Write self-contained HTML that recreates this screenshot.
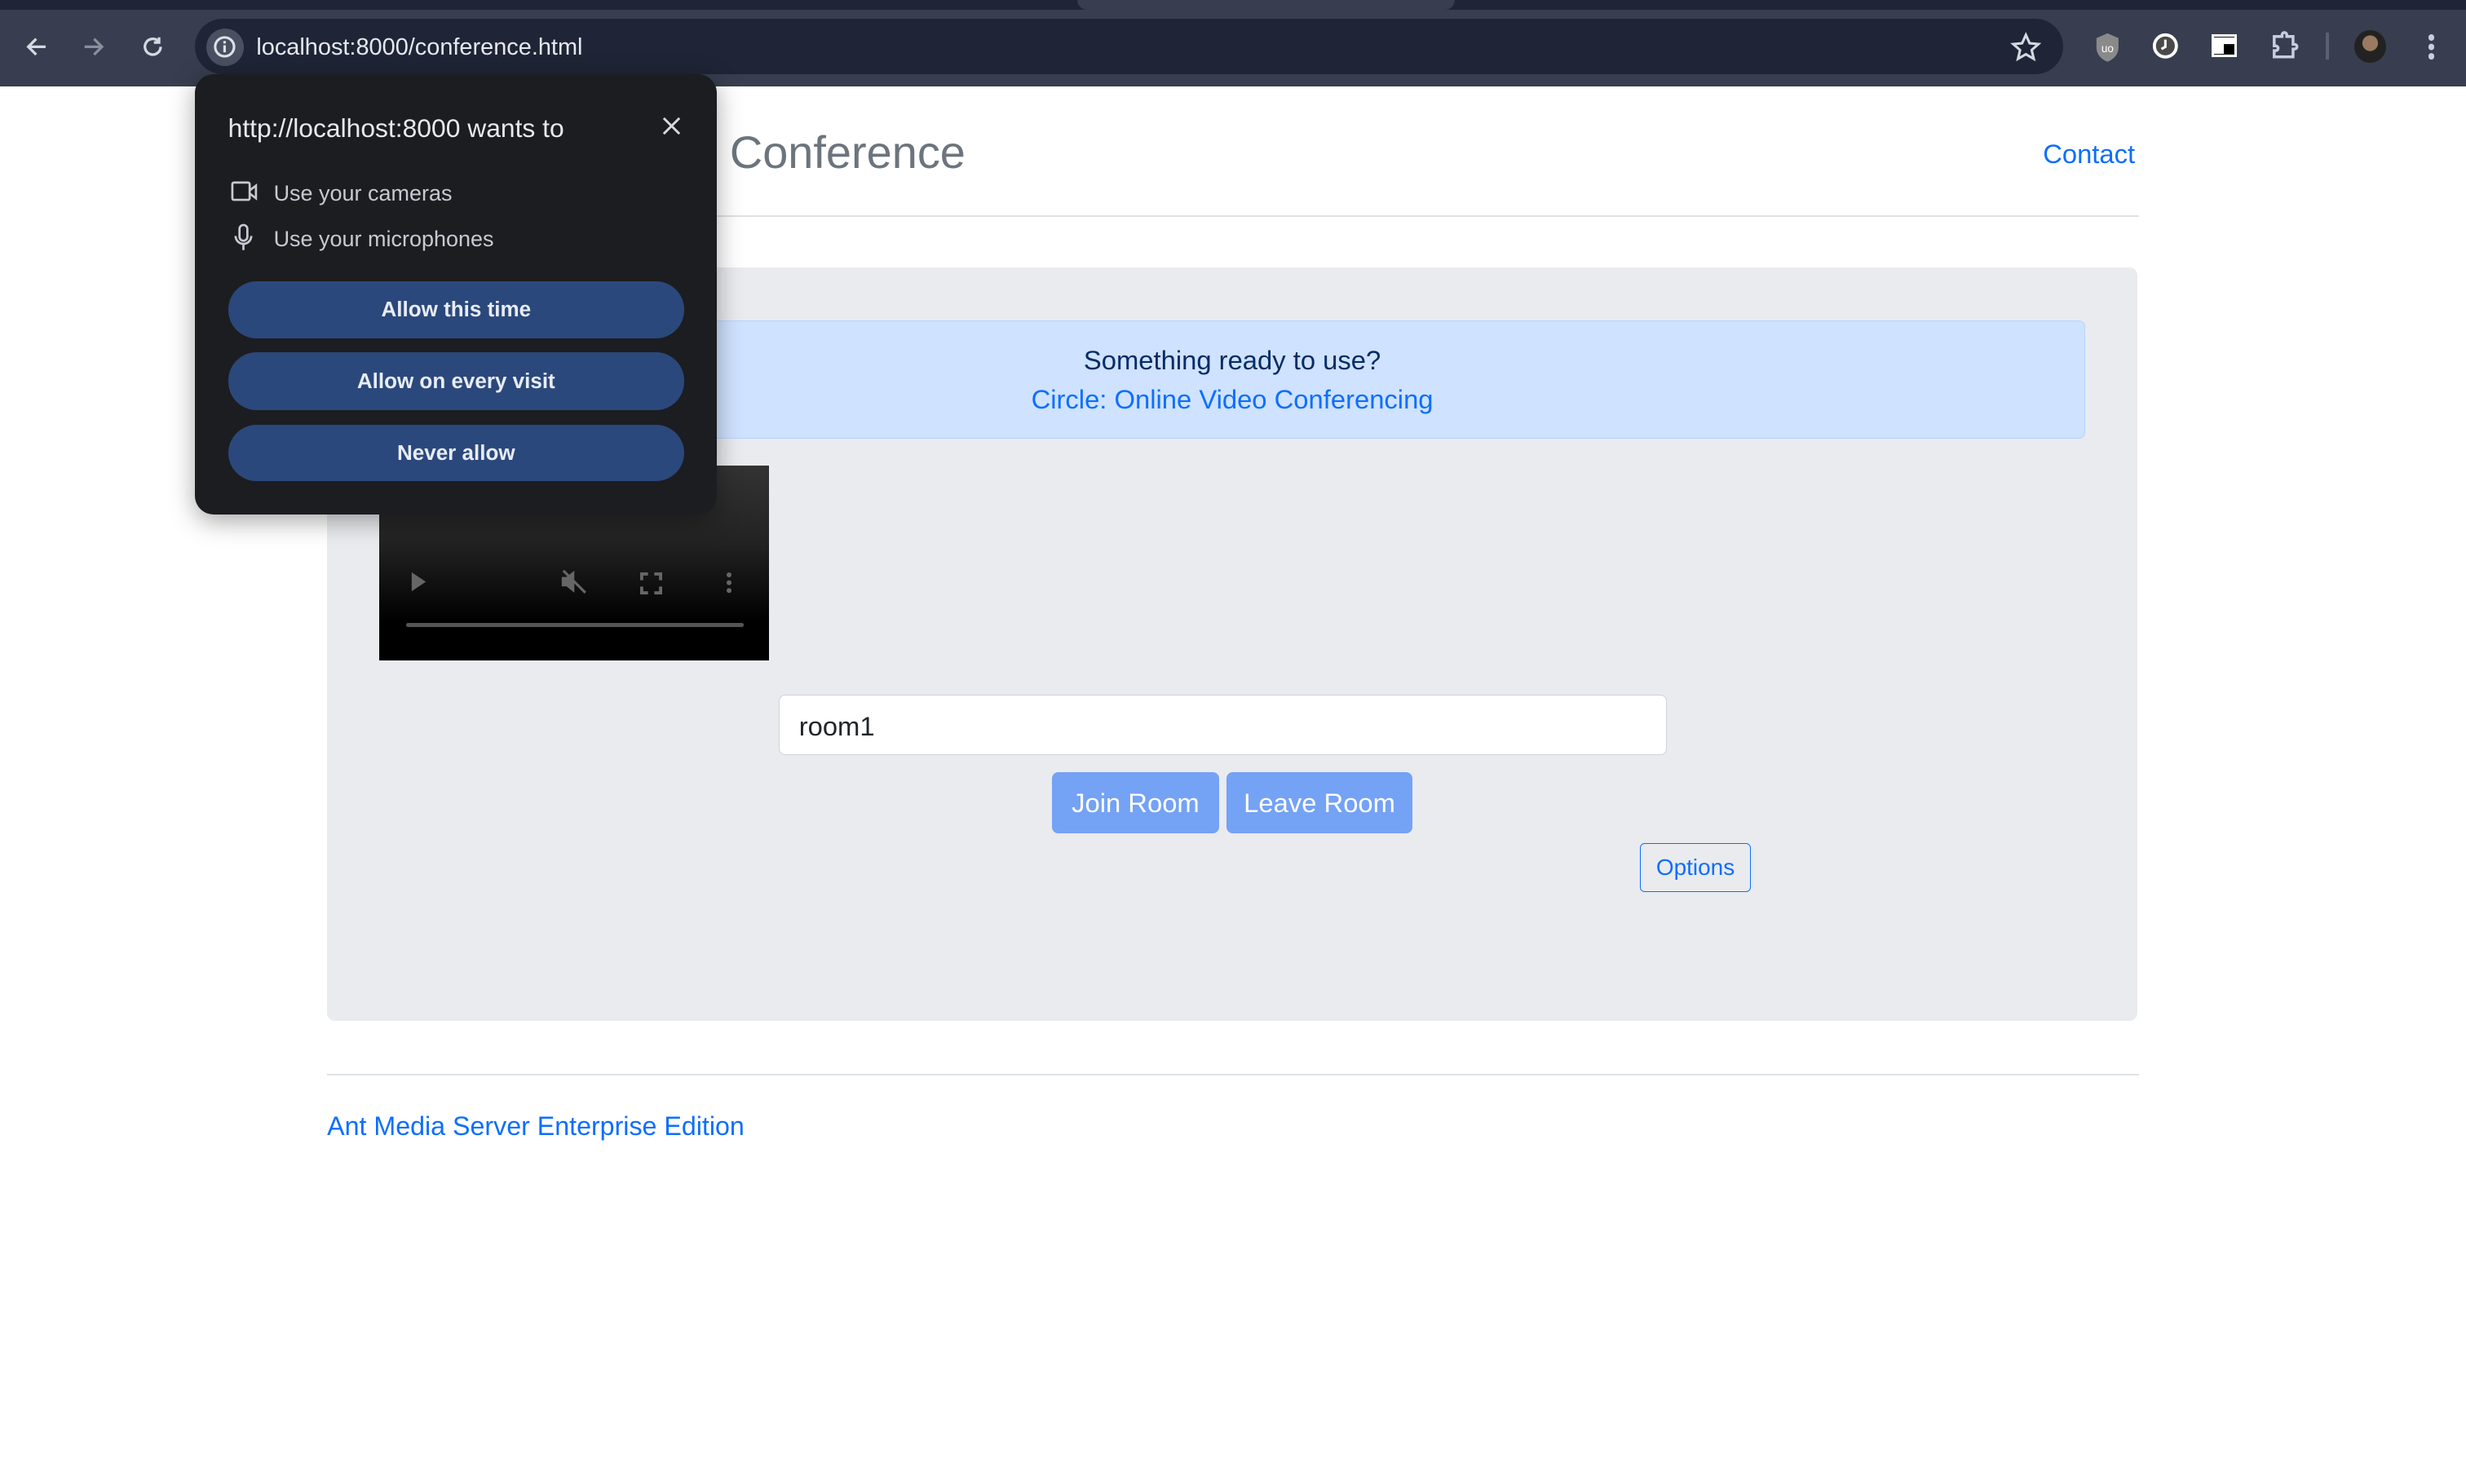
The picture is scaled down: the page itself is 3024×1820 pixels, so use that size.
<!DOCTYPE html>
<html><head><meta charset="utf-8"><style>
html{zoom:1.92857}
body{margin:0;width:1568px;height:943.7px;overflow:hidden;background:#fff;font-family:"Liberation Sans",Arial,sans-serif;position:relative}
.a{position:absolute}
</style></head><body>
<div class="a" style="left:0;top:0;width:1568px;height:55px;background:#383e4f"></div>
<div class="a" style="left:0;top:0;width:1568px;height:6px;background:#1f2536"></div>
<div class="a" style="left:685px;top:0;width:240px;height:6px;background:#383e4f;border-radius:0 0 8px 8px"></div>
<div class="a" style="left:124px;top:12px;width:1188px;height:35px;border-radius:18px;background:#1f2536"></div>
<div class="a" style="left:131px;top:18px;width:24px;height:24px;border-radius:12px;background:#4a5062"></div>
<svg class="a" style="left:135px;top:22px" width="16" height="16" viewBox="0 0 16 16"><circle cx="8" cy="8" r="6" fill="none" stroke="#dfe1e8" stroke-width="1.6"/><rect x="7.2" y="7" width="1.6" height="4.5" fill="#dfe1e8"/><rect x="7.2" y="4.3" width="1.6" height="1.6" fill="#dfe1e8"/></svg>
<div class="a" style="left:163px;top:22px;color:#e6e8ef;font-size:15px">localhost:8000/conference.html</div>
<svg class="a" style="left:14px;top:21px" width="18" height="18" viewBox="0 0 18 18" fill="none" stroke="#d6d9e2" stroke-width="1.7"><path d="M15 9H4M9 4L4 9l5 5"/></svg>
<svg class="a" style="left:51px;top:21px" width="18" height="18" viewBox="0 0 18 18" fill="none" stroke="#8a8f9c" stroke-width="1.7"><path d="M3 9h11M9 4l5 5-5 5"/></svg>
<svg class="a" style="left:88px;top:21px" width="18" height="18" viewBox="0 0 18 18" fill="none" stroke="#d6d9e2" stroke-width="1.7"><path d="M14 9a5 5 0 1 1-1.5-3.6"/><path d="M13 3v3.3H9.7" /></svg>
<svg class="a" style="left:1278px;top:20px" width="20" height="20" viewBox="0 0 20 20"><path d="M10 2l2.4 5.3 5.6.5-4.3 3.8 1.3 5.6L10 14.3 5 17.2l1.3-5.6L2 7.8l5.6-.5z" fill="none" stroke="#d6d9e2" stroke-width="1.6"/></svg>
<svg class="a" style="left:1331px;top:20px" width="18" height="20" viewBox="0 0 18 20"><path d="M9 1l7 3v6c0 5-4 8-7 9-3-1-7-4-7-9V4z" fill="#8a8a8a"/><text x="9" y="13" font-size="7" fill="#fff" text-anchor="middle" font-family="Liberation Sans">uo</text></svg>
<svg class="a" style="left:1368px;top:20px" width="18" height="18" viewBox="0 0 18 18"><circle cx="9" cy="9" r="7" fill="#4a4a4a" stroke="#fff" stroke-width="2"/><path d="M9 5v4.5L6.5 11" stroke="#fff" stroke-width="1.6" fill="none"/></svg>
<div class="a" style="left:1406px;top:22px;width:13px;height:11px;border:2px solid #fff;background:#111"></div>
<div class="a" style="left:1414px;top:29px;width:6px;height:5px;background:#000"></div><div class="a" style="left:1408px;top:24px;width:13px;height:4px;background:#fff"></div><div class="a" style="left:1408px;top:24px;width:6px;height:10px;background:#fff"></div>
<svg class="a" style="left:1443px;top:19px" width="20" height="20" viewBox="0 0 20 20" fill="none" stroke="#c8cde0" stroke-width="1.8"><path d="M3 4h5V3a1.5 1.5 0 0 1 3 0v1h4v5h1a1.5 1.5 0 0 1 0 3h-1v5H3v-4h1a1.5 1.5 0 0 0 0-3H3z"/></svg>
<div class="a" style="left:1479px;top:21px;width:2px;height:17px;background:#5a6072"></div>
<div class="a" style="left:1497px;top:19px;width:20px;height:21px;border-radius:50%;background:radial-gradient(circle at 50% 40%,#9a7a60 0 30%,#222 32%);"></div>
<div class="a" style="left:1544px;top:22px;width:4px;height:4px;border-radius:2px;background:#c8cde0;box-shadow:0 6px 0 #c8cde0,0 12px 0 #c8cde0"></div>

<div class="a" style="left:464px;top:80px;font-size:29px;color:#6c757d;font-weight:500">Conference</div>
<div class="a" style="left:1299px;top:88px;font-size:17px;color:#0d6efd">Contact</div>
<div class="a" style="left:208px;top:137px;width:1152px;height:1px;background:#dee2e6"></div>
<div class="a" style="left:208px;top:170px;width:1151px;height:479px;background:#e9ebef;border-radius:5px"></div>
<div class="a" style="left:241px;top:204px;width:1084px;height:74px;background:#cfe2ff;border:1px solid #b6d4fe;border-radius:4px;text-align:center;font-size:17px">
<div style="margin-top:15px;color:#052c65">Something ready to use?</div>
<div style="margin-top:5px;color:#0d6efd">Circle: Online Video Conferencing</div></div>
<div class="a" style="left:241px;top:296px;width:248px;height:124px;background:linear-gradient(#333 0%,#222 40%,#000 80%)"></div>
<svg class="a" style="left:260px;top:363px" width="12" height="14"><path d="M2 1l9 6-9 6z" fill="#666"/></svg>
<svg class="a" style="left:355px;top:361px" width="20" height="18" viewBox="0 0 20 18"><path d="M2 6h3l5-4v14l-5-4H2z" fill="#666"/><path d="M3 2l14 14" stroke="#666" stroke-width="1.6"/></svg>
<svg class="a" style="left:407px;top:364px" width="14" height="14" fill="none" stroke="#666" stroke-width="2"><path d="M1 5V1h4M9 1h4v4M13 9v4H9M5 13H1V9"/></svg>
<div class="a" style="left:462px;top:364px;width:3px;height:3px;border-radius:2px;background:#666;box-shadow:0 5px 0 #666,0 10px 0 #666"></div>
<div class="a" style="left:258px;top:396px;width:215px;height:3px;background:#555;border-radius:2px"></div>
<div class="a" style="left:495px;top:442px;width:564px;height:37px;background:#fff;border:1px solid #ced4da;border-radius:4px"></div>
<div class="a" style="left:508px;top:452px;font-size:17px;color:#212529">room1</div>
<div class="a" style="left:669px;top:491px;width:106px;height:39px;background:#74a2f5;border-radius:4px;color:#fff;font-size:17px;text-align:center;line-height:39px">Join Room</div>
<div class="a" style="left:780px;top:491px;width:118px;height:39px;background:#74a2f5;border-radius:4px;color:#fff;font-size:17px;text-align:center;line-height:39px">Leave Room</div>
<div class="a" style="left:1043px;top:536px;width:69px;height:30px;border:1px solid #0d6efd;border-radius:3px;color:#0d6efd;font-size:14.5px;text-align:center;line-height:30px">Options</div>
<div class="a" style="left:208px;top:683px;width:1152px;height:1px;background:#dee2e6"></div>
<div class="a" style="left:208px;top:707px;font-size:16.7px;color:#0d6efd">Ant Media Server Enterprise Edition</div>

<div class="a" style="left:124px;top:47px;width:332px;height:280px;background:#1c1d21;border-radius:12px;box-shadow:0 4px 16px rgba(0,0,0,.35)"></div>
<div class="a" style="left:145px;top:72px;font-size:16.5px;color:#e8e9ee;font-weight:500">http://localhost:8000 wants to</div>
<svg class="a" style="left:420px;top:73px" width="14" height="14" stroke="#d6d9e2" stroke-width="1.5"><path d="M2 2l10 10M12 2L2 12"/></svg>
<svg class="a" style="left:147px;top:114px" width="18" height="16" fill="none" stroke="#c8cad2" stroke-width="1.4"><rect x="1" y="2" width="11" height="11" rx="1"/><path d="M12 7l4-3v8l-4-3"/></svg>
<div class="a" style="left:174px;top:115px;font-size:14px;color:#c8cad2">Use your cameras</div>
<svg class="a" style="left:148px;top:142px" width="14" height="18" fill="none" stroke="#c8cad2" stroke-width="1.4"><rect x="4.5" y="1" width="5" height="10" rx="2.5"/><path d="M2 8a5 5 0 0 0 10 0M7 13v4"/></svg>
<div class="a" style="left:174px;top:144px;font-size:14px;color:#c8cad2">Use your microphones</div>
<div class="a" style="left:145px;top:179px;width:290px;height:36px;border-radius:18px;background:#2b487c;color:#e8ecf5;font-size:13.5px;font-weight:bold;text-align:center;line-height:36px">Allow this time</div>
<div class="a" style="left:145px;top:224px;width:290px;height:37px;border-radius:18px;background:#2b487c;color:#e8ecf5;font-size:13.5px;font-weight:bold;text-align:center;line-height:37px">Allow on every visit</div>
<div class="a" style="left:145px;top:270px;width:290px;height:36px;border-radius:18px;background:#2b487c;color:#e8ecf5;font-size:13.5px;font-weight:bold;text-align:center;line-height:36px">Never allow</div>
</body></html>
